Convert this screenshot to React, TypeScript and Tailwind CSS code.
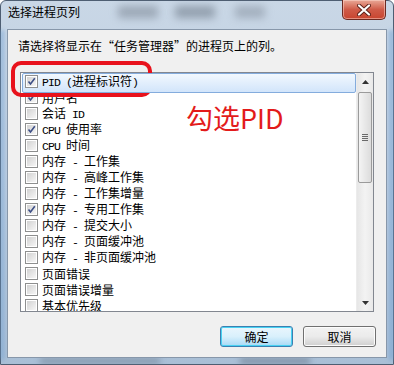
import React from "react";

const CJK = '"Noto Sans CJK SC", "Noto Sans", sans-serif';

function Mixed({ text }: { text: string }) {
  const parts = text.split(/([\x00-\x7F]+)/).filter((p) => p.length > 0);
  return (
    <span className="whitespace-pre">
      {parts.map((p, i) =>
        /^[\x00-\x7F]+$/.test(p) ? (
          <span
            key={i}
            className="text-[11.5px] tracking-[-0.9px]"
            style={{ fontFamily: '"Liberation Mono", monospace' }}
          >
            {p}
          </span>
        ) : (
          <span key={i} className="text-[12px]">
            {p}
          </span>
        )
      )}
    </span>
  );
}

function CheckBox({ checked }: { checked: boolean }) {
  return (
    <div className="w-[13px] h-[13px] border border-[#8e8f8f] bg-white p-[1px] shrink-0">
      <div className="w-full h-full bg-gradient-to-br from-[#d2d2d2] to-[#f6f6f6] relative">
        {checked && (
          <svg viewBox="0 0 9 9" className="absolute inset-0 w-[9px] h-[9px]">
            <path d="M1.5 4.5 L3.5 7 L7.8 1.2" stroke="#3d4f86" strokeWidth="1.6" fill="none" />
          </svg>
        )}
      </div>
    </div>
  );
}

const rows: [string, boolean][] = [
  ["PID (进程标识符)", true],
  ["用户名", true],
  ["会话 ID", false],
  ["CPU 使用率", true],
  ["CPU 时间", false],
  ["内存 - 工作集", false],
  ["内存 - 高峰工作集", false],
  ["内存 - 工作集增量", false],
  ["内存 - 专用工作集", true],
  ["内存 - 提交大小", false],
  ["内存 - 页面缓冲池", false],
  ["内存 - 非页面缓冲池", false],
  ["页面错误", false],
  ["页面错误增量", false],
  ["基本优先级", false],
];

function Button({ label, primary }: { label: string; primary?: boolean }) {
  return (
    <div
      className={
        "w-[73px] h-[21px] rounded-[3px] border flex items-center justify-center text-[12px] text-black " +
        (primary
          ? "border-[#3c7fb1] bg-gradient-to-b from-[#eaf6fd] via-[#d9f0fc] to-[#a7d9f5] shadow-[inset_0_0_0_1px_#48d2f2]"
          : "border-[#707070] bg-gradient-to-b from-[#f2f2f2] via-[#ebebeb] to-[#cfcfcf] shadow-[inset_0_0_0_1px_#fcfcfc]")
      }
    >
      {label}
    </div>
  );
}

export default function App() {
  return (
    <div className="w-[394px] h-[365px] relative overflow-hidden" style={{ fontFamily: CJK }}>
      <div className="absolute inset-0 bg-gradient-to-b from-[#c9d7e6] via-[#bccde0] to-[#a9bfd6] border border-[#4e5e72] rounded-t-[6px]" />
      {/* blurred glass blobs */}
      <div className="absolute left-[118px] top-[6px] w-[40px] h-[12px] bg-[#7d8896] blur-[4px] opacity-60" />
      <div className="absolute left-[175px] top-[6px] w-[40px] h-[12px] bg-[#6e7a88] blur-[4px] opacity-60" />
      <div className="absolute left-[235px] top-[6px] w-[30px] h-[12px] bg-[#7d8896] blur-[4px] opacity-50" />
      <div className="absolute left-[0px] top-[30px] w-[4px] h-[330px] bg-[#6f9ed0] blur-[2px] opacity-60" />
      <div className="absolute right-[0px] top-[30px] w-[5px] h-[330px] bg-[#6f9ed0] blur-[2px] opacity-60" />
      <div className="absolute left-[40px] bottom-[1px] w-[120px] h-[6px] bg-[#5f6e80] blur-[3px] opacity-50" />
      <div className="absolute left-[240px] bottom-[1px] w-[70px] h-[6px] bg-[#5f6e80] blur-[3px] opacity-60" />

      <div className="relative flex flex-col h-full">
        {/* title bar */}
        <div className="h-[29px] flex items-start pl-[8px] pt-[5px] relative">
          <span className="text-[12px] leading-[14px] text-black">选择进程页列</span>
          <div className="absolute right-[8px] top-0 w-[44px] h-[20px] rounded-b-[5px] border border-t-0 border-[#6b2a22] bg-gradient-to-b from-[#e8a897] via-[#cf5b48] to-[#c8442f] shadow-[inset_0_0_0_1px_rgba(255,220,210,0.5)] flex items-center justify-center">
            <svg viewBox="0 0 14 12" className="w-[14px] h-[12px]">
              <path d="M2 1.5 L12 10.5 M12 1.5 L2 10.5" stroke="#5a2018" strokeWidth="4" strokeLinecap="round" />
              <path d="M2 1.5 L12 10.5 M12 1.5 L2 10.5" stroke="#ffffff" strokeWidth="2.2" strokeLinecap="round" />
            </svg>
          </div>
        </div>

        {/* client */}
        <div className="mx-[7px] h-[329px] border border-[#8797aa] bg-[#f0f0f0] flex flex-col px-[10px] relative">
          <div className="pt-[9px] text-[12px] leading-[14px] text-black">
            请选择将显示在“任务管理器”的进程页上的列。
          </div>

          <div className="mt-[19px] ml-[2px] w-[354px] h-[240px] border border-[#828790] bg-white flex relative">
            <div className="flex-1 overflow-hidden relative">
              {rows.map(([label, checked], i) => (
                <div
                  key={i}
                  className={
                    "h-[16px] flex items-center pl-[4px] gap-[4px] text-black leading-[16px] relative " +
                    (i === 0 ? "z-10" : "")
                  }
                >
                  {i === 0 && (
                    <div className="absolute left-[1px] right-[0px] top-0 h-[20px] rounded-[2px] border border-[#84acdd] bg-gradient-to-b from-[#f2f8fe] to-[#d2e5fb]" />
                  )}
                  <div className="relative flex items-center gap-[4px]">
                    <CheckBox checked={checked} />
                    <Mixed text={label} />
                  </div>
                </div>
              ))}
              <div
                className="absolute left-[165px] top-[29px] text-[27px] leading-[32px] text-[#e31b1b]"
                style={{ fontFamily: CJK }}
              >
                勾选PID
              </div>
            </div>
            {/* scrollbar */}
            <div className="w-[17px] h-full bg-gradient-to-r from-[#e6e6e6] via-[#f3f3f3] to-[#e9e9e9] flex flex-col border-l border-[#ececec]">
              <div className="h-[17px] flex items-center justify-center">
                <svg viewBox="0 0 7 4" className="w-[7px] h-[4px]">
                  <path d="M3.5 0 L7 4 L0 4 Z" fill="#333" />
                </svg>
              </div>
              <div className="mx-[1px] mt-[2px] h-[91px] rounded-[2px] border border-[#9b9b9b] bg-gradient-to-r from-[#f4f4f4] to-[#dcdcdc] flex items-center justify-center">
                <div className="flex flex-col gap-[1px]">
                  <div className="w-[6px] h-[1px] bg-[#6a6a6a]" />
                  <div className="w-[6px] h-[1px] bg-[#6a6a6a]" />
                  <div className="w-[6px] h-[1px] bg-[#6a6a6a]" />
                  <div className="w-[6px] h-[1px] bg-[#6a6a6a]" />
                </div>
              </div>
              <div className="flex-1" />
              <div className="h-[17px] flex items-center justify-center">
                <svg viewBox="0 0 7 4" className="w-[7px] h-[4px]">
                  <path d="M0 0 L7 0 L3.5 4 Z" fill="#333" />
                </svg>
              </div>
            </div>
          </div>

          <div className="mt-[14px] flex justify-end gap-[10px]">
            <Button label="确定" primary />
            <Button label="取消" />
          </div>
        </div>
      </div>

      {/* red annotation frame */}
      <div className="absolute left-[11px] top-[61px] w-[141px] h-[36px] border-[4px] border-[#e8121c] rounded-[10px]" />
    </div>
  );
}
